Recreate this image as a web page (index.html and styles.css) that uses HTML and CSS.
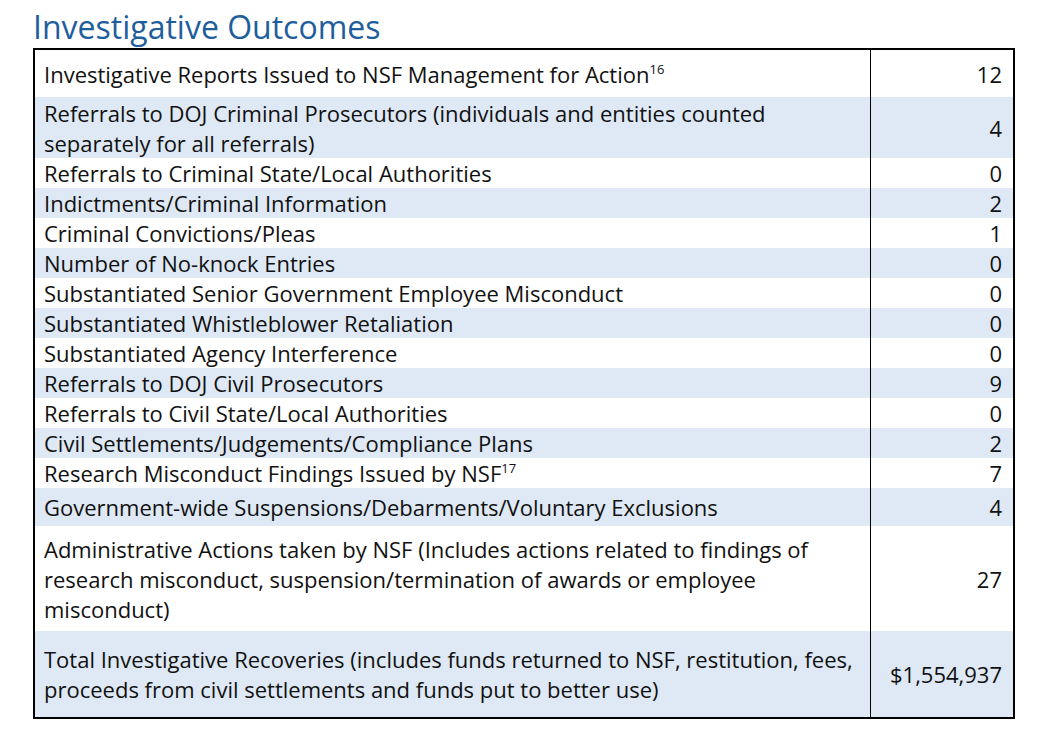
FILE: index.html
```html
<!DOCTYPE html>
<html>
<head>
<meta charset="utf-8">
<link rel="stylesheet" href="styles.css">
</head>
<body>
<h1 class="title">Investigative Outcomes</h1>
<table class="outcomes">
  <tr class="w h47"><td class="label">Investigative Reports Issued to NSF Management for Action<sup>16</sup></td><td class="num">12</td></tr>
  <tr class="b h61"><td class="label">Referrals to DOJ Criminal Prosecutors (individuals and entities counted separately for all referrals)</td><td class="num">4</td></tr>
  <tr class="w"><td class="label">Referrals to Criminal State/Local Authorities</td><td class="num">0</td></tr>
  <tr class="b"><td class="label">Indictments/Criminal Information</td><td class="num">2</td></tr>
  <tr class="w"><td class="label">Criminal Convictions/Pleas</td><td class="num">1</td></tr>
  <tr class="b"><td class="label">Number of No-knock Entries</td><td class="num">0</td></tr>
  <tr class="w"><td class="label">Substantiated Senior Government Employee Misconduct</td><td class="num">0</td></tr>
  <tr class="b"><td class="label">Substantiated Whistleblower Retaliation</td><td class="num">0</td></tr>
  <tr class="w"><td class="label">Substantiated Agency Interference</td><td class="num">0</td></tr>
  <tr class="b"><td class="label">Referrals to DOJ Civil Prosecutors</td><td class="num">9</td></tr>
  <tr class="w"><td class="label">Referrals to Civil State/Local Authorities</td><td class="num">0</td></tr>
  <tr class="b"><td class="label">Civil Settlements/Judgements/Compliance Plans</td><td class="num">2</td></tr>
  <tr class="w"><td class="label">Research Misconduct Findings Issued by NSF<sup>17</sup></td><td class="num">7</td></tr>
  <tr class="b h38"><td class="label">Government-wide Suspensions/Debarments/Voluntary Exclusions</td><td class="num">4</td></tr>
  <tr class="w h105"><td class="label">Administrative Actions taken by NSF (Includes actions related to findings of research misconduct, suspension/termination of awards or employee misconduct)</td><td class="num">27</td></tr>
  <tr class="b h86"><td class="label">Total Investigative Recoveries (includes funds returned to NSF, restitution, fees, proceeds from civil settlements and funds put to better use)</td><td class="num">$1,554,937</td></tr>
</table>
</body>
</html>
```

FILE: styles.css
```css
html, body {
  margin: 0;
  padding: 0;
  background: #ffffff;
}
body {
  font-family: "Open Sans", "Liberation Sans", sans-serif;
  color: #111111;
  padding: 6px 0 0 33px;
}
.title {
  margin: 0;
  font-size: 32px;
  font-weight: 400;
  color: #1f5e9c;
  line-height: 42px;
}
.outcomes {
  border-collapse: collapse;
  border: 2px solid #000000;
  width: 982px;
  font-size: 22px;
  line-height: 30px;
}
.outcomes td {
  padding: 0 10px;
  vertical-align: middle;
  height: 30px;
}
.outcomes .label {
  width: 816px;
  border-right: 1px solid #000000;
  padding-left: 9px;
  padding-right: 10px;
}
.outcomes .num {
  text-align: right;
  padding-right: 11px;
}
.outcomes tr.b td {
  background: #dee9f5;
}
.outcomes tr.h47 td { height: 47px; }
.outcomes tr.h61 td { height: 61px; }
.outcomes tr.h38 td { height: 38px; }
.outcomes tr.h105 td { height: 105px; }
.outcomes tr.h86 td { height: 86px; }
.outcomes sup {
  font-size: 13px;
  line-height: 0;
  vertical-align: 9px;
}
```
